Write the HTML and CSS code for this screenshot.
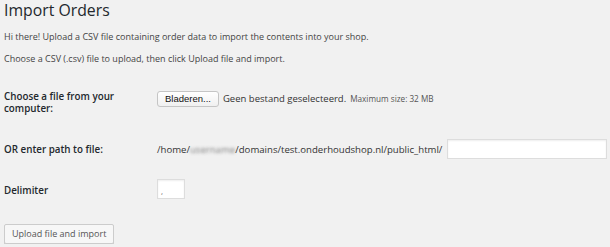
FILE: index.html
```html
<!DOCTYPE html>
<html>
<head>
<meta charset="utf-8">
<link rel="stylesheet" href="styles.css">
</head>
<body>
<div class="wrap">
  <h1 class="title">Import Orders</h1>
  <p class="intro">Hi there! Upload a CSV file containing order data to import the contents into your shop.</p>
  <p class="intro">Choose a CSV (.csv) file to upload, then click Upload file and import.</p>
  <table class="form-table">
    <tr class="row-file">
      <th>Choose a file from your computer:</th>
      <td>
        <span class="file-btn">Bladeren...</span><span class="file-none">Geen bestand geselecteerd.</span><small class="max">Maximum size: 32 MB</small>
      </td>
    </tr>
    <tr class="row-path">
      <th>OR enter path to file:</th>
      <td>
        <div class="path-line"><span class="path-text">/home/<span class="blurred">username</span>/domains/test.onderhoudshop.nl/public_html/</span><span class="text-input wide"></span></div>
      </td>
    </tr>
    <tr class="row-delim">
      <th>Delimiter</th>
      <td><span class="text-input small">,</span></td>
    </tr>
  </table>
  <div class="submit"><span class="button">Upload file and import</span></div>
</div>
</body>
</html>
```
FILE: styles.css
```css
html, body {
  margin: 0;
  padding: 0;
  background: #f1f1f1;
}
body {
  font-family: "Open Sans", "Liberation Sans", sans-serif;
  font-size: 9px;
  color: #444;
  line-height: 1.4;
}
.wrap {
  padding: 0 4px;
}
.title {
  font-size: 15.8px;
  font-weight: 400;
  color: #23282d;
  margin: 0;
  line-height: 20px;
}
.intro {
  margin: 11px 0 0;
  line-height: 11px;
}
.form-table {
  border-collapse: collapse;
  margin-top: 17px;
  width: 100%;
  table-layout: fixed;
}
.form-table th {
  text-align: left;
  vertical-align: top;
  font-weight: 600;
  color: #23282d;
  width: 153px;
  padding: 0;
  font-size: 9.8px;
  line-height: 12px;
}
.form-table td {
  vertical-align: top;
  padding: 0;
  line-height: 12px;
}
.row-file th, .row-file td { padding-top: 10px; padding-bottom: 20px; }
.row-path th { padding-top: 9px; padding-bottom: 17px; }
.row-path td { padding-top: 4px; padding-bottom: 14px; }
.row-delim th { padding-top: 12px; padding-bottom: 27px; }
.row-delim td { padding-top: 6px; padding-bottom: 25px; }
.file-btn {
  display: inline-block;
  font-family: "Liberation Sans", sans-serif;
  font-size: 9.5px;
  color: #111;
  background: linear-gradient(#fff, #f0f0f0);
  border: 1px solid #c5c5c5;
  border-radius: 3px;
  padding: 1px 7px;
  line-height: 12px;
}
.file-none {
  font-size: 9.5px;
  margin-left: 4px;
  color: #333;
}
.max {
  font-size: 8.2px;
  margin-left: 4px;
  color: #555;
}
.path-line {
  display: flex;
  align-items: flex-start;
  gap: 5px;
  font-size: 9.6px;
  color: #333;
}
.path-text {
  padding-top: 5px;
  white-space: nowrap;
}
.blurred {
  color: transparent;
  text-shadow: 0 0 3px rgba(110,110,110,0.85);
}
.text-input {
  display: inline-block;
  background: #fff;
  border: 1px solid #ddd;
  box-shadow: inset 0 1px 2px rgba(0,0,0,0.07);
  box-sizing: border-box;
}
.text-input.wide {
  width: 160px;
  height: 20px;
  flex: none;
}
.text-input.small {
  width: 28px;
  height: 20px;
  font-size: 8px;
  line-height: 10px;
  padding: 6px 0 0 3px;
  color: #666;
}
.button {
  display: inline-block;
  font-size: 9px;
  color: #555;
  background: #f7f7f7;
  border: 1px solid #ccc;
  border-radius: 2px;
  box-shadow: 0 1px 0 #ccc;
  padding: 0 7px;
  line-height: 18px;
}
```
